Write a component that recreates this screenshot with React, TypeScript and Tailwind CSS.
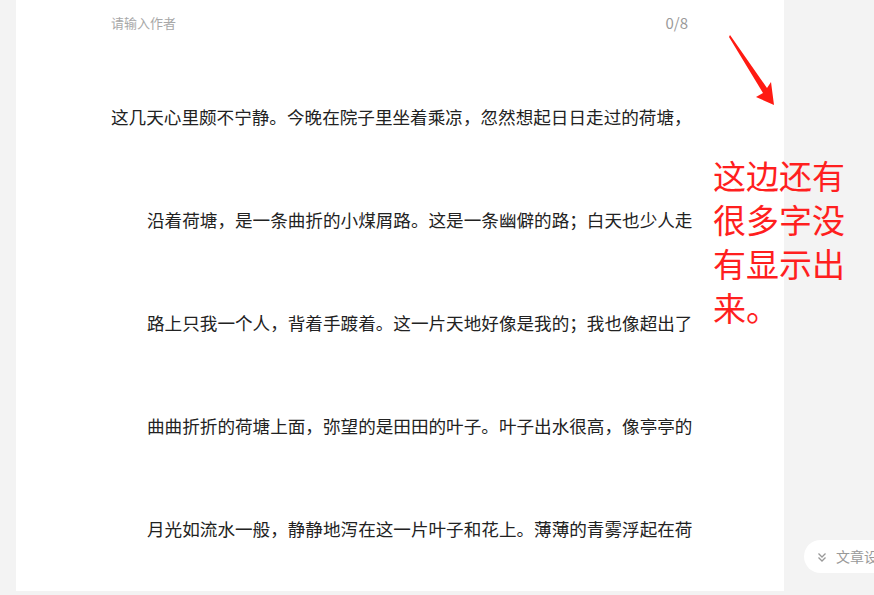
const lines = [
  "沿着荷塘，是一条曲折的小煤屑路。这是一条幽僻的路；白天也少人走",
  "路上只我一个人，背着手踱着。这一片天地好像是我的；我也像超出了",
  "曲曲折折的荷塘上面，弥望的是田田的叶子。叶子出水很高，像亭亭的",
  "月光如流水一般，静静地泻在这一片叶子和花上。薄薄的青雾浮起在荷",
];

const font = { fontFamily: '"Noto Sans CJK SC", "Noto Sans", sans-serif' };

export default function App() {
  return (
    <div className="relative h-[595px] w-full overflow-hidden bg-[#f3f3f3]" style={font}>
      <main className="ml-4 h-[591px] w-[768px] bg-white pl-[95px] pr-[96px]">
        <div className="flex items-center justify-between pt-[13px]">
          <span className="text-[13px] leading-5 text-[#a8a8a8]">请输入作者</span>
          <span className="text-[15px] leading-5 text-[#9a9a9a]">0/8</span>
        </div>

        <div className="mt-[72px] flex flex-col gap-[79px] text-[17.6px] leading-6 text-[#222] whitespace-nowrap">
          <p>这几天心里颇不宁静。今晚在院子里坐着乘凉，忽然想起日日走过的荷塘，</p>
          {lines.map((line) => (
            <p key={line} className="pl-9">
              {line}
            </p>
          ))}
        </div>
      </main>

      <svg className="absolute left-[725px] top-[30px]" width="60" height="85" viewBox="0 0 60 85">
        <polygon points="5,5 42,58 46,52 49,75 31,67 38,63 4,7" fill="#ff1a12" />
      </svg>

      <div className="absolute left-[713px] top-[153px] w-[140px] text-[33px] leading-[44px] text-[#ff1f1f]">
        这边还有很多字没有显示出来。
      </div>

      <div className="absolute left-[804px] top-[540px] flex h-[33px] w-[120px] items-center gap-2 rounded-full bg-white pl-3 text-[14px] text-[#999]">
        <svg width="12" height="12" viewBox="0 0 12 12" fill="none" stroke="#999" strokeWidth="1.3">
          <path d="M2.5 2.5 6 6 9.5 2.5" />
          <path d="M2.5 6.5 6 10 9.5 6.5" />
        </svg>
        <span>文章设置</span>
      </div>
    </div>
  );
}
